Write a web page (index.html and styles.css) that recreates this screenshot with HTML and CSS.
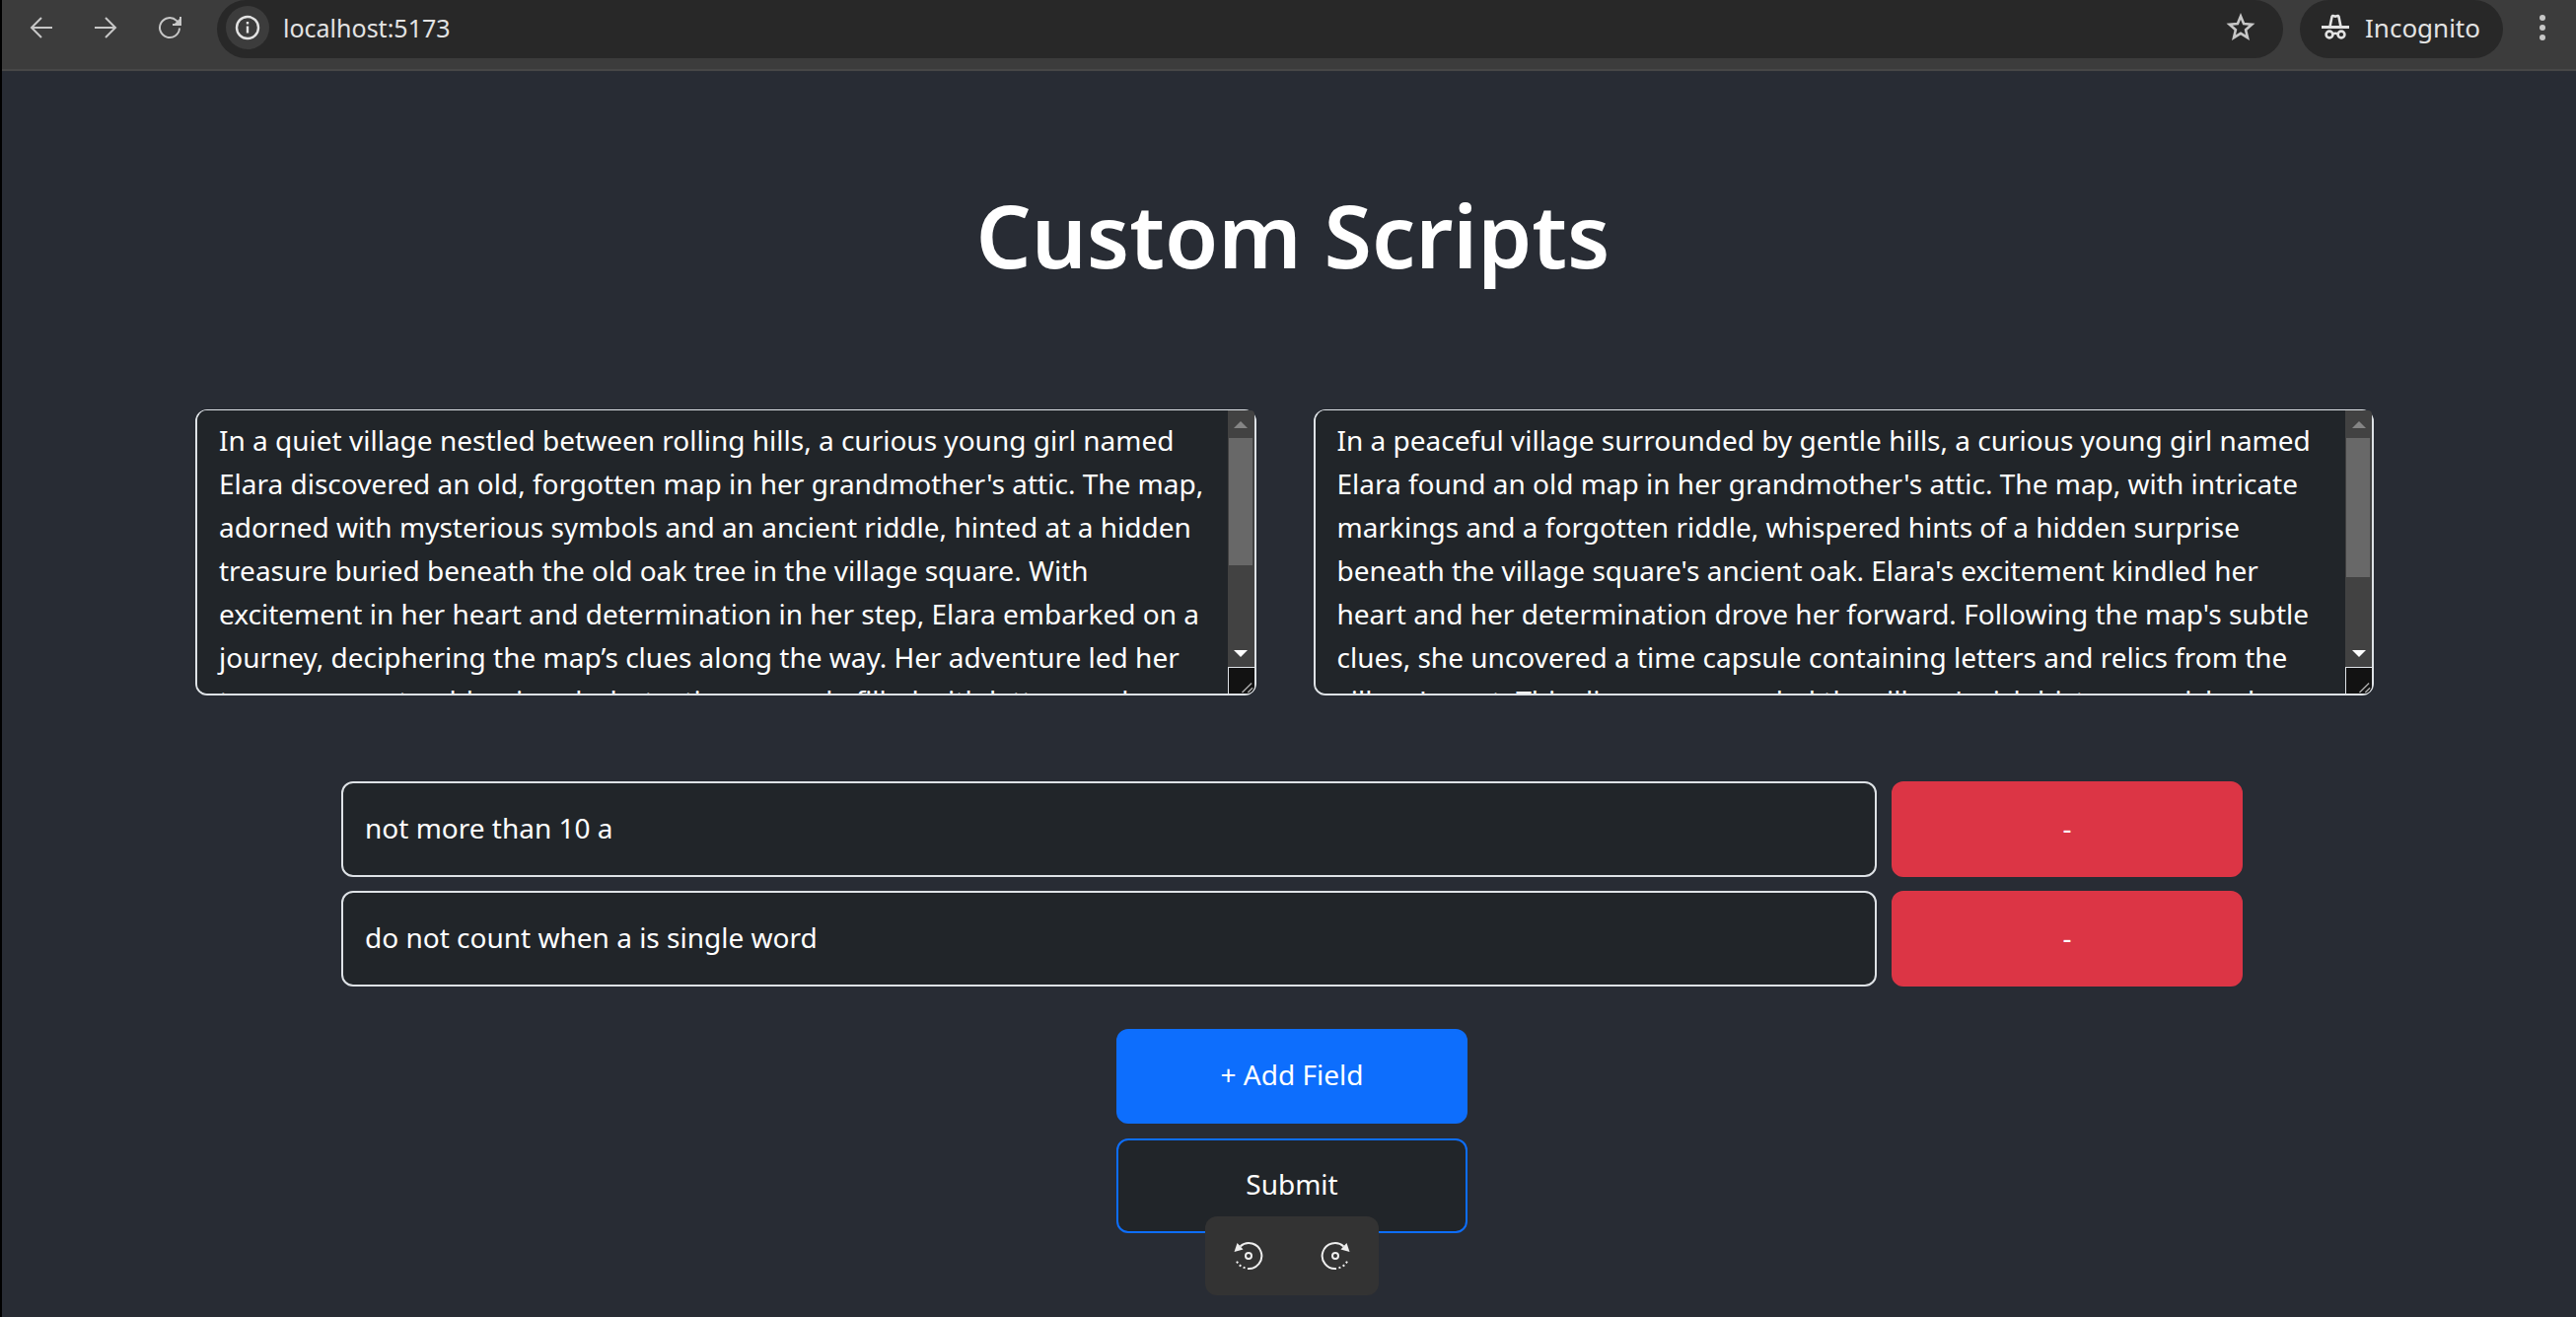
FILE: index.html
```html
<!DOCTYPE html>
<html lang="en">
<head>
<meta charset="utf-8">
<title>Custom Scripts</title>
<link rel="stylesheet" href="styles.css">
</head>
<body>
<header class="browser-bar">
  <nav class="nav-buttons" aria-label="Navigation">
    <button class="icon-button" type="button" aria-label="Back"><svg width="24" height="24" viewBox="0 0 24 24" fill="none" stroke="currentColor" stroke-width="2"><path d="M23 12H2M12 2L2 12l10 10"/></svg></button>
    <button class="icon-button" type="button" aria-label="Forward"><svg width="24" height="24" viewBox="0 0 24 24" fill="none" stroke="currentColor" stroke-width="2"><path d="M1 12h21M12 2l10 10-10 10"/></svg></button>
    <button class="icon-button" type="button" aria-label="Reload"><svg width="24" height="24" viewBox="0 0 24 24" fill="none" stroke="currentColor" stroke-width="2"><path d="M22 12.500a10 10 0 1 1-3-7.600l3 3.200M23 1v8h-8"/><path d="M22 3v6h-6z" fill="currentColor" stroke="none"/></svg></button>
  </nav>
  <div class="address-bar">
    <button class="site-info" type="button" aria-label="Site information"><svg width="26" height="26" viewBox="0 0 26 26" fill="none" stroke="currentColor" stroke-width="2.400"><circle cx="13" cy="13" r="11"/><path d="M13 11.500v7M13 7v2.500"/></svg></button>
    <input class="address" type="text" aria-label="Address" value="localhost:5173">
    <button class="icon-button" type="button" aria-label="Bookmark"><svg width="30" height="30" viewBox="0 0 30 30" fill="none" stroke="currentColor" stroke-width="2.600"><path d="M15 3.500l3.100 7.600 8.200.7-6.200 5.400 1.900 8L15 20.900l-7 4.300 1.900-8-6.200-5.400 8.200-.7z"/></svg></button>
  </div>
  <div class="incognito">
    <svg width="28" height="28" viewBox="0 0 28 28" fill="none" stroke="currentColor" stroke-width="2.600"><path d="M0 13.500h28" stroke-width="3"/><path d="M8.500 13L10.500 3q.5-1.500 2-.8 1.500.8 3 0 1.500-.7 2 .8l2 10"/><circle cx="8" cy="21" r="3.400"/><circle cx="20" cy="21" r="3.400"/><path d="M11 20.500q3-1.500 6 0"/></svg>
    <span>Incognito</span>
  </div>
  <button class="icon-button menu-button" type="button" aria-label="Menu"><svg width="8" height="28" viewBox="0 0 8 28" fill="currentColor"><circle cx="4" cy="4" r="3"/><circle cx="4" cy="14" r="3"/><circle cx="4" cy="24" r="3"/></svg></button>
</header>
<main class="page">
  <h1 class="title">Custom Scripts</h1>
  <section class="scripts">
    <div class="script-box">
      <textarea class="box script" aria-label="First script">In a quiet village nestled between rolling hills, a curious young girl named
Elara discovered an old, forgotten map in her grandmother's attic. The map,
adorned with mysterious symbols and an ancient riddle, hinted at a hidden
treasure buried beneath the old oak tree in the village square. With
excitement in her heart and determination in her step, Elara embarked on a
journey, deciphering the map’s clues along the way. Her adventure led her
to uncover not gold or jewels, but a time capsule filled with letters and</textarea>
      <div class="scrollbar" aria-hidden="true">
        <span class="arrow up"></span>
        <span class="track"><span class="thumb" style="height: 63%"></span></span>
        <span class="arrow down"></span>
        <svg class="grip" width="27" height="27" viewBox="0 0 27 27" fill="none" stroke="#aaa" stroke-width="1.500"><path d="M14 26L24 16M20 26l5-5"/></svg>
      </div>
    </div>
    <div class="script-box">
      <textarea class="box script" aria-label="Second script">In a peaceful village surrounded by gentle hills, a curious young girl named
Elara found an old map in her grandmother's attic. The map, with intricate
markings and a forgotten riddle, whispered hints of a hidden surprise
beneath the village square's ancient oak. Elara's excitement kindled her
heart and her determination drove her forward. Following the map's subtle
clues, she uncovered a time capsule containing letters and relics from the
village's past. This discovery revealed the village's rich history, enriched</textarea>
      <div class="scrollbar" aria-hidden="true">
        <span class="arrow up"></span>
        <span class="track"><span class="thumb" style="height: 69%"></span></span>
        <span class="arrow down"></span>
        <svg class="grip" width="27" height="27" viewBox="0 0 27 27" fill="none" stroke="#aaa" stroke-width="1.500"><path d="M14 26L24 16M20 26l5-5"/></svg>
      </div>
    </div>
  </section>
  <form class="rules">
    <div class="rule">
      <input class="box field" type="text" aria-label="Rule 1" value="not more than 10 a">
      <button class="button remove" type="button">-</button>
    </div>
    <div class="rule">
      <input class="box field" type="text" aria-label="Rule 2" value="do not count when a is single word">
      <button class="button remove" type="button">-</button>
    </div>
    <div class="actions">
      <button class="button add" type="button">+ Add Field</button>
      <button class="button submit" type="submit">Submit</button>
    </div>
  </form>
</main>
<div class="rotate-bar">
  <button class="icon-button" type="button" aria-label="Rotate left"><svg width="32" height="32" viewBox="0 0 32 32" fill="none" stroke="currentColor" stroke-width="2"><path d="M7.500 6.500A13 13 0 1 1 15 29"/><path d="M12.500 28.300A13 13 0 0 1 4 21.500" stroke-dasharray="2 2.500"/><circle cx="16" cy="16" r="3"/><path d="M4.500 3L1.500 12l9-2.500z" fill="currentColor" stroke="none"/></svg></button>
  <button class="icon-button" type="button" aria-label="Rotate right"><svg width="32" height="32" viewBox="0 0 32 32" fill="none" stroke="currentColor" stroke-width="2"><path d="M24.500 6.500A13 13 0 1 0 17 29"/><path d="M19.500 28.300A13 13 0 0 0 28 21.500" stroke-dasharray="2 2.500"/><circle cx="16" cy="16" r="3"/><path d="M27.500 3l3 9-9-2.500z" fill="currentColor" stroke="none"/></svg></button>
</div>
</body>
</html>
```
FILE: styles.css
```css
* {
  box-sizing: border-box;
}

body {
  margin: 0;
  min-height: 100vh;
  background: #282c34;
  border-left: 2px solid #000;
  color: #fff;
  font-family: "Noto Sans", "Open Sans", sans-serif;
  font-size: 28px;
}

button,
input,
textarea {
  font: inherit;
  color: inherit;
}

.browser-bar {
  display: flex;
  align-items: flex-start;
  height: 72px;
  background: #3c3c3c;
  border-bottom: 2px solid #474747;
  color: #c7c7c7;
  font-size: 26px;
}

.nav-buttons {
  display: flex;
  gap: 41px;
  padding: 0 36px 0 28px;
}

.icon-button {
  display: flex;
  align-items: center;
  justify-content: center;
  height: 56px;
  padding: 0;
  border: 0;
  background: none;
  color: inherit;
}

.address-bar {
  display: flex;
  flex: 1;
  align-items: center;
  height: 59px;
  padding: 0 28px 3px 9px;
  background: #282828;
  border-radius: 30px;
}

.site-info {
  display: flex;
  align-items: center;
  justify-content: center;
  width: 44px;
  height: 44px;
  padding: 0;
  border: 0;
  border-radius: 50%;
  background: #3c3c3c;
  color: #e3e3e3;
}

.address {
  flex: 1;
  min-width: 0;
  padding: 0 14px;
  border: 0;
  background: none;
  color: #e3e3e3;
  font-size: 25px;
}

.incognito {
  display: flex;
  align-items: center;
  gap: 16px;
  height: 59px;
  margin-left: 17px;
  padding: 0 23px 3px 22px;
  background: #282828;
  border-radius: 30px;
  color: #e3e3e3;
}

.menu-button {
  padding: 0 30px 0 36px;
}

.page {
  padding: 104px 8px 0 16px;
}

.title {
  margin: 0;
  font-size: 88px;
  font-weight: 600;
  line-height: 124px;
  text-align: center;
}

.scripts {
  display: grid;
  grid-template-columns: 1fr 1fr;
  gap: 58px;
  margin: 115px 197px 0 180px;
}

.script-box {
  position: relative;
  height: 290px;
}

.box {
  background: #212529;
  border: 2px solid #dee2e6;
  border-radius: 12px;
}

.script {
  display: block;
  width: 100%;
  height: 100%;
  padding: 8px 22px 0;
  border-top-width: 1px;
  line-height: 44px;
  white-space: pre;
  overflow-x: hidden;
  overflow-y: auto;
  resize: none;
  scrollbar-width: none;
}

.scrollbar {
  position: absolute;
  top: 1px;
  right: 2px;
  bottom: 2px;
  display: flex;
  flex-direction: column;
  width: 27px;
  background: #424242;
  border-radius: 0 4px 8px 0;
  overflow: hidden;
}

.arrow {
  display: flex;
  align-items: center;
  justify-content: center;
  height: 28px;
}

.arrow::before {
  content: "";
  border: 7px solid transparent;
}

.up::before {
  border-top-width: 0;
  border-bottom-color: #858585;
}

.down::before {
  border-bottom-width: 0;
  border-top-color: #fff;
}

.track {
  flex: 1;
  padding: 0 2px 0 1px;
}

.thumb {
  display: block;
  background: #686868;
}

.grip {
  background: #121212;
  border: solid #dee2e6;
  border-width: 1px 0 0 1px;
}

.rules {
  display: flex;
  flex-direction: column;
  gap: 14px;
  margin: 87px 330px 0 328px;
}

.rule {
  display: flex;
  gap: 15px;
}

.field {
  flex: 1;
  min-width: 0;
  height: 97px;
  padding: 0 22px 4px;
}

.button {
  width: 356px;
  height: 97px;
  padding: 0 0 4px;
  border: 2px solid transparent;
  border-radius: 12px;
}

.remove {
  background: #dc3545;
  border-color: #dc3545;
}

.actions {
  display: flex;
  flex-direction: column;
  align-items: center;
  gap: 15px;
  margin-top: 29px;
}

.actions .button {
  height: 96px;
}

.add {
  background: #0d6efd;
  border-color: #0d6efd;
}

.submit {
  background: #212529;
  border-color: #0d6efd;
}

.rotate-bar {
  position: absolute;
  top: 1233px;
  left: 50%;
  display: flex;
  align-items: center;
  justify-content: space-around;
  width: 176px;
  height: 80px;
  margin-left: -84px;
  background: #333;
  border-radius: 12px;
  color: #eee;
}
```
